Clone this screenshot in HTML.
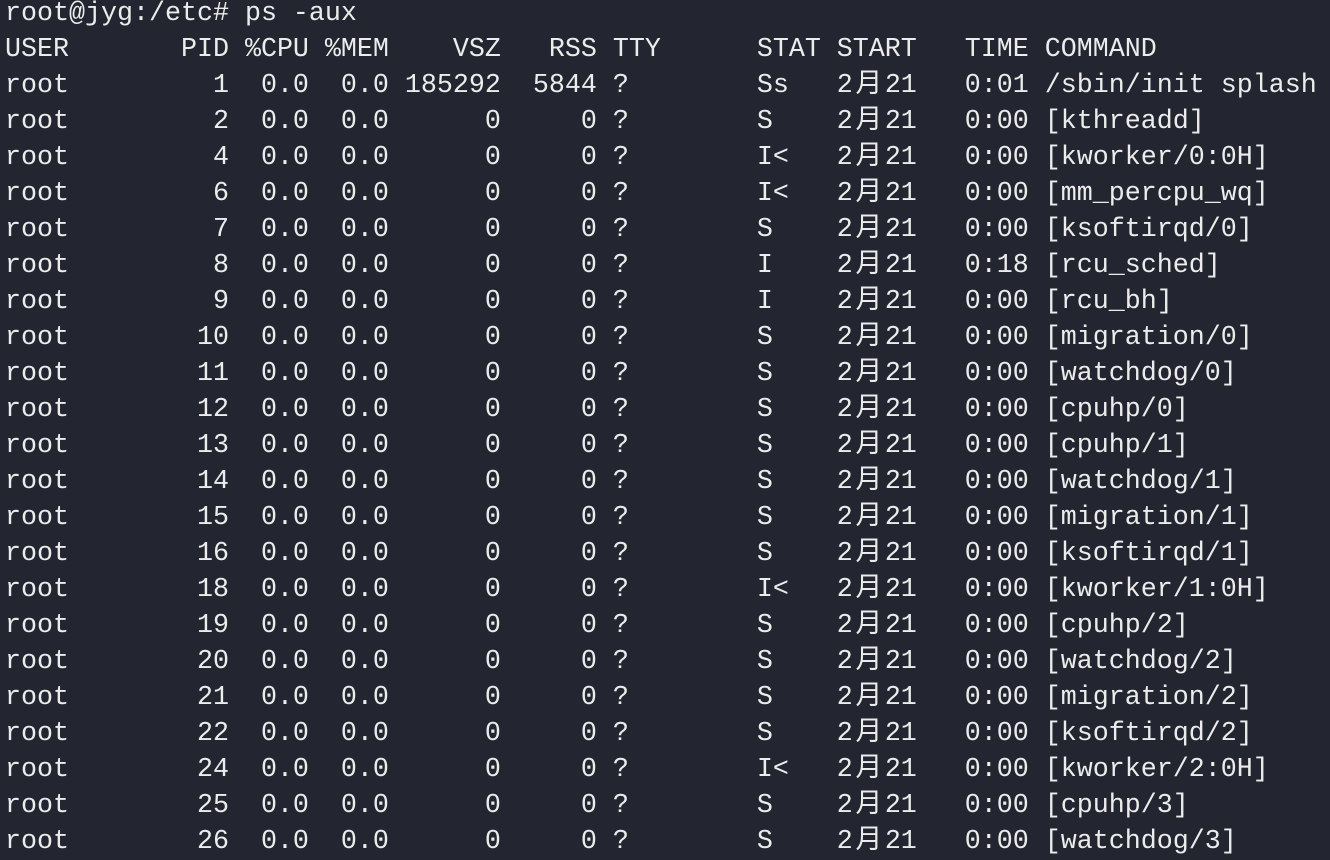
<!DOCTYPE html>
<html><head><meta charset="utf-8"><style>
html,body{margin:0;padding:0;background:#232530;width:1330px;height:830px;overflow:hidden}
pre{margin:0;position:absolute;left:5px;top:-4px;font-family:"Liberation Mono","Noto Sans CJK SC",monospace;font-size:26.67px;line-height:36px;color:#ececec;letter-spacing:0}
.w{display:inline-block;width:32px;text-align:center}
</style></head><body>
<pre>root@jyg:/etc# ps -aux
USER       PID %CPU %MEM    VSZ   RSS TTY      STAT START   TIME COMMAND
root         1  0.0  0.0 185292  5844 ?        Ss   2<span class="w">月</span>21   0:01 /sbin/init splash
root         2  0.0  0.0      0     0 ?        S    2<span class="w">月</span>21   0:00 [kthreadd]
root         4  0.0  0.0      0     0 ?        I&lt;   2<span class="w">月</span>21   0:00 [kworker/0:0H]
root         6  0.0  0.0      0     0 ?        I&lt;   2<span class="w">月</span>21   0:00 [mm_percpu_wq]
root         7  0.0  0.0      0     0 ?        S    2<span class="w">月</span>21   0:00 [ksoftirqd/0]
root         8  0.0  0.0      0     0 ?        I    2<span class="w">月</span>21   0:18 [rcu_sched]
root         9  0.0  0.0      0     0 ?        I    2<span class="w">月</span>21   0:00 [rcu_bh]
root        10  0.0  0.0      0     0 ?        S    2<span class="w">月</span>21   0:00 [migration/0]
root        11  0.0  0.0      0     0 ?        S    2<span class="w">月</span>21   0:00 [watchdog/0]
root        12  0.0  0.0      0     0 ?        S    2<span class="w">月</span>21   0:00 [cpuhp/0]
root        13  0.0  0.0      0     0 ?        S    2<span class="w">月</span>21   0:00 [cpuhp/1]
root        14  0.0  0.0      0     0 ?        S    2<span class="w">月</span>21   0:00 [watchdog/1]
root        15  0.0  0.0      0     0 ?        S    2<span class="w">月</span>21   0:00 [migration/1]
root        16  0.0  0.0      0     0 ?        S    2<span class="w">月</span>21   0:00 [ksoftirqd/1]
root        18  0.0  0.0      0     0 ?        I&lt;   2<span class="w">月</span>21   0:00 [kworker/1:0H]
root        19  0.0  0.0      0     0 ?        S    2<span class="w">月</span>21   0:00 [cpuhp/2]
root        20  0.0  0.0      0     0 ?        S    2<span class="w">月</span>21   0:00 [watchdog/2]
root        21  0.0  0.0      0     0 ?        S    2<span class="w">月</span>21   0:00 [migration/2]
root        22  0.0  0.0      0     0 ?        S    2<span class="w">月</span>21   0:00 [ksoftirqd/2]
root        24  0.0  0.0      0     0 ?        I&lt;   2<span class="w">月</span>21   0:00 [kworker/2:0H]
root        25  0.0  0.0      0     0 ?        S    2<span class="w">月</span>21   0:00 [cpuhp/3]
root        26  0.0  0.0      0     0 ?        S    2<span class="w">月</span>21   0:00 [watchdog/3]</pre>
</body></html>
